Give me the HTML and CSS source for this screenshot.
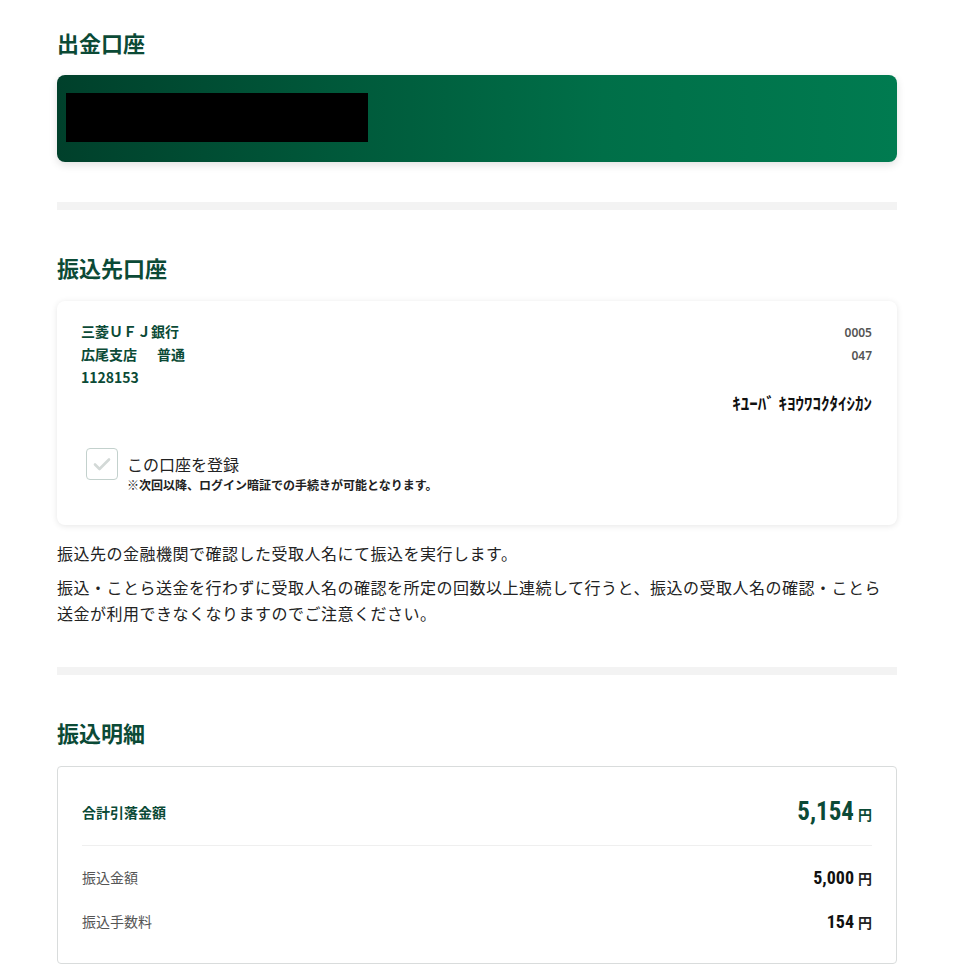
FILE: index.html
```html
<!DOCTYPE html>
<html lang="ja">
<head>
<meta charset="utf-8">
<link rel="stylesheet" href="styles.css">
</head>
<body>
<main class="page">
  <section class="section">
    <h2 class="heading">出金口座</h2>
    <div class="source-card">
      <div class="masked"></div>
    </div>
  </section>

  <div class="divider"></div>

  <section class="section">
    <h2 class="heading">振込先口座</h2>
    <div class="dest-card">
      <div class="dest-rows">
        <div class="row"><span class="bank">三菱ＵＦＪ銀行</span><span class="code">0005</span></div>
        <div class="row"><span class="bank branch"><span>広尾支店</span><span>普通</span></span><span class="code">047</span></div>
        <div class="row"><span class="bank">1128153</span></div>
      </div>
      <div class="kana">ｷﾕｰﾊﾞ ｷﾖｳﾜｺｸﾀｲｼｶﾝ</div>
      <div class="register">
        <span class="checkbox">
          <svg width="18" height="14" viewBox="0 0 18 14"><path d="M2 7.5 L6.5 12 L16 2.5" fill="none" stroke="#d3d9d7" stroke-width="2.6" stroke-linecap="round" stroke-linejoin="round"/></svg>
        </span>
        <div class="register-text">
          <div class="register-label">この口座を登録</div>
          <div class="register-note">※次回以降、ログイン暗証での手続きが可能となります。</div>
        </div>
      </div>
    </div>
    <p class="notice first">振込先の金融機関で確認した受取人名にて振込を実行します。</p>
    <p class="notice">振込・ことら送金を行わずに受取人名の確認を所定の回数以上連続して行うと、振込の受取人名の確認・ことら送金が利用できなくなりますのでご注意ください。</p>
  </section>

  <div class="divider second"></div>

  <section class="section">
    <h2 class="heading">振込明細</h2>
    <div class="detail-card">
      <div class="total">
        <span class="total-label">合計引落金額</span>
        <span class="amount total-amount"><span class="num">5,154</span><span class="yen">円</span></span>
      </div>
      <div class="lines">
        <div class="line"><span class="line-label">振込金額</span><span class="amount"><span class="num">5,000</span><span class="yen">円</span></span></div>
        <div class="line"><span class="line-label">振込手数料</span><span class="amount"><span class="num">154</span><span class="yen">円</span></span></div>
      </div>
    </div>
  </section>
</main>
</body>
</html>
```

FILE: styles.css
```css
* { box-sizing: border-box; }
html, body { margin: 0; padding: 0; background: #fff; }
body {
  font-family: "Noto Sans CJK JP", "Noto Sans", sans-serif;
  color: #222;
}
.page {
  width: 840px;
  margin-left: 57px;
  padding-top: 26px;
}
.heading {
  margin: 0;
  font-size: 22px;
  line-height: 32px;
  font-weight: 700;
  color: #0b4a36;
}
.source-card {
  margin-top: 17px;
  height: 87px;
  border-radius: 8px;
  background: linear-gradient(90deg, #00402b 0%, #005a3b 35%, #006f48 65%, #007b50 100%);
  box-shadow: 0 3px 8px rgba(0,0,0,0.12);
  padding: 18px 0 0 9px;
}
.masked {
  width: 302px;
  height: 49px;
  background: #000;
}
.divider {
  height: 8px;
  background: #f3f3f3;
  margin-top: 40px;
  margin-bottom: 41px;
}
.divider.second { margin-top: 41px; margin-bottom: 41px; }
.dest-card {
  margin-top: 18px;
  border-radius: 8px;
  background: #fff;
  box-shadow: 0 1px 6px rgba(0,0,0,0.10);
  padding: 19px 25px 32px 24px;
}
.dest-rows { display: flex; flex-direction: column; }
.row {
  display: flex;
  justify-content: space-between;
  align-items: baseline;
  height: 23px;
}
.bank {
  font-size: 14px;
  font-weight: 700;
  color: #0b4a36;
  line-height: 23px;
}
.branch { display: flex; gap: 20px; }
.code {
  font-family: "Noto Sans", "Noto Sans CJK JP", sans-serif;
  font-size: 12px;
  font-weight: 600;
  color: #555;
}
.kana {
  text-align: right;
  font-size: 17px;
  font-weight: 700;
  color: #111;
  margin-top: 2px;
  line-height: 24px;
}
.register {
  display: flex;
  gap: 9px;
  margin-top: 33px;
  margin-left: 5px;
}
.checkbox {
  width: 32px;
  height: 32px;
  border: 1px solid #c3d1cd;
  border-radius: 4px;
  display: flex;
  align-items: center;
  justify-content: center;
  flex: none;
}
.register-text { padding-top: 5px; }
.register-label {
  font-size: 16px;
  line-height: 22px;
  color: #222;
}
.register-note {
  font-size: 12px;
  font-weight: 700;
  line-height: 17px;
  margin-top: 1px;
  color: #222;
}
.notice {
  margin: 0;
  font-size: 16px;
  letter-spacing: 0.5px;
  line-height: 26px;
  color: #222;
}
.notice.first { margin-top: 15px; margin-bottom: 8px; }
.detail-card {
  margin-top: 18px;
  border: 1px solid #d9dcdc;
  border-radius: 4px;
  padding: 0 24px 20px 24px;
}
.total {
  display: flex;
  justify-content: space-between;
  align-items: center;
  height: 79px;
  border-bottom: 1px solid #efefef;
  padding-top: 11px;
}
.total-label {
  font-size: 14px;
  font-weight: 700;
  color: #0b4a36;
}
.amount { display: flex; align-items: baseline; gap: 4px; }
.num {
  font-family: "Roboto Condensed", "Liberation Sans Narrow", "DejaVu Sans Condensed", Roboto, sans-serif;
  font-weight: 700;
  font-size: 18px;
  color: #111;
}
.yen { font-size: 14px; font-weight: 700; color: #222; }
.total-amount .num { font-size: 25px; color: #0b4a36; }
.total-amount .yen { color: #0b4a36; }
.lines { padding-top: 9px; }
.line {
  display: flex;
  justify-content: space-between;
  align-items: center;
  height: 44px;
}
.line-label { font-size: 14px; color: #555; }
```
